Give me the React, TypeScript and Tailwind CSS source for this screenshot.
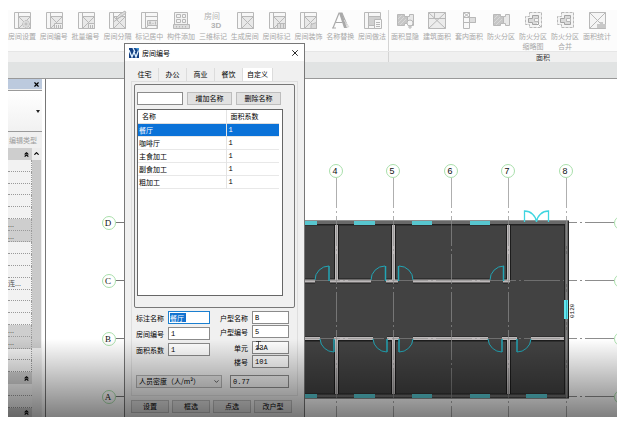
import { useState } from "react";
import type { ReactNode } from "react";
import { ChevronDown, ChevronUp, ChevronsUp, X } from "lucide-react";

const roomFrame = (
  <>
    <path d="M1.5 1.5h16v16h-16z" fill="#f7f7f7" />
    <path d="M5.5 1.5v16M5.5 5.5h12" />
  </>
);

const roomCross = (
  <>
    {roomFrame}
    <path d="M5.5 5.5h12v12h-12z" fill="#e8e8e8" />
    <path d="M5.5 5.5l12 12M17.5 5.5l-12 12" />
  </>
);

const roomTools: { label: string; icon: ReactNode }[] = [
  {
    label: "房间设置",
    icon: (
      <>
        {roomCross}
        <circle cx="13" cy="13" r="3.5" fill="#dcdcdc" strokeDasharray="1.5 1" />
        <circle cx="13" cy="13" r="1" />
      </>
    ),
  },
  {
    label: "房间编号",
    icon: (
      <>
        {roomCross}
        <path d="M9.5 12.5h8v5h-8z" fill="#eee" />
        <path d="M11.5 14v3M13.5 14v3M15.5 14v3" />
      </>
    ),
  },
  {
    label: "批量编号",
    icon: (
      <>
        {roomCross}
        <path d="M11.5 12.5h6v5h-6z" fill="#eee" />
        <path d="M13.5 14v3M15.5 14v3" />
      </>
    ),
  },
  {
    label: "房间分隔",
    icon: (
      <>
        {roomCross}
        <path d="M8 7l4-4 5-3 1 2-4 3-5 3z" fill="#ddd" />
        <path d="M5.5 11l8-6" />
      </>
    ),
  },
  {
    label: "标记居中",
    icon: (
      <>
        {roomFrame}
        <path d="M7.5 9.5h10v5h-10z" fill="#e4e4e4" />
        <path d="M9 13.5l1-3 1 3M12.5 12.5h1M15.5 10.5v3M8 14.5l-2 3M17 14.5v3" />
      </>
    ),
  },
  {
    label: "构件添加",
    icon: (
      <>
        <path d="M2.5 1.5h13v12h-13z" fill="#f3f3f3" />
        <path d="M4.5 3.5h4v3h-4zM10.5 3.5h3v3h-3zM4.5 8.5h4v3h-4zM10.5 8.5h3v3h-3z" />
        <path d="M1.5 13.5h16v4h-16z" fill="#ddd" />
        <path d="M4.5 15v1.5M7.5 15v1.5M10.5 15v1.5M13.5 15v1.5" />
      </>
    ),
  },
  {
    label: "三维标记",
    icon: (
      <g stroke="none" fill="#b2b2b2">
        <text x="0" y="8" fontSize="8" fontFamily="Noto Sans CJK SC, sans-serif">房间</text>
        <text x="7" y="17" fontSize="8" fontWeight="700" fontFamily="Liberation Sans, sans-serif">3D</text>
      </g>
    ),
  },
  { label: "生成房间", icon: roomCross },
  {
    label: "房间标记",
    icon: (
      <>
        {roomCross}
        <path d="M9.5 12.5h8v5h-8z" fill="#ddd" />
        <path d="M12.5 13v4M15.5 13v4" />
      </>
    ),
  },
  {
    label: "房间装饰",
    icon: (
      <>
        {roomCross}
        <path d="M12 13.5l5.500-2v6H12z" fill="#d8d8d8" />
      </>
    ),
  },
  {
    label: "名称替换",
    icon: (
      <>
        <path d="M2 17L8 2h3l5 12" stroke="#a9a9a9" strokeWidth="1.2" />
        <path d="M8 2h3l5 15h-3z" fill="#a9a9a9" stroke="none" />
        <path d="M4.500 11.500h7M1 17h4" stroke="#a9a9a9" strokeWidth="1.2" />
        <path d="M13 9l5 7M15 13l2 4" stroke="#d8d8d8" />
      </>
    ),
  },
  {
    label: "房间做法",
    icon: (
      <>
        {roomFrame}
        <path d="M5.5 5.500h12v9h-12z" fill="#d0d0d0" />
        <path d="M11.5 8.5h7v9h-7z" fill="#f8f8f8" />
        <path d="M13 11.5h4M13 13.5h4M13 15.5h4" />
      </>
    ),
  },
];

const unitPlan = (
  <>
    <path d="M1.5 3.5h7v2h3v7h-3v2h-7z" fill="#c6c6c6" />
    <path d="M11.5 5.5h2v-2h4v11h-4v-2h-2z" fill="#e8e8e8" />
    <path d="M2 8l4-4M2 12l6-6M4 14l6-6" stroke="#d8d8d8" />
  </>
);

const splitPlan = (
  <>
    <path d="M5.5 1.5h12v15h-12v-3h-4v-8h4z" fill="#f4f4f4" strokeDasharray="3 1" />
    <path d="M8.5 4.500h6v9h-6v-2h-4v-4h4z" fill="#dadada" stroke="#a4a4a4" />
    <path d="M10.5 7.5h4v3h-4z" fill="#f6f6f6" />
  </>
);

const areaTools: { label: string; icon: ReactNode }[] = [
  {
    label: "面积显隐",
    icon: (
      <>
        {unitPlan}
        <circle cx="14" cy="12" r="3" fill="#f4f4f4" />
        <path d="M13 15h2v2h-2z" />
      </>
    ),
  },
  {
    label: "建筑面积",
    icon: (
      <>
        <path d="M.5 1.5h17v16H.5z" fill="#ececec" />
        <path d="M.5 1.5l17 16M17.5 1.5l-17 16M.5 7.5h17M6.5 1.5v6" />
      </>
    ),
  },
  {
    label: "套内面积",
    icon: (
      <>
        <path d="M3.5 1.5h6v5h6v5h-6v6h-6z" fill="#f9f9f9" />
        <path d="M3.5 1.5l6 5M9.5 1.5l-6 5M3.5 6.5h6M3.5 11.5h6" />
        <path d="M9.5 6.5h6v5h-6z" fill="#ddd" />
      </>
    ),
  },
  { label: "防火分区", icon: unitPlan },
  {
    label: "防火分区\n缩略图",
    icon: (
      <>
        {splitPlan}
        <path d="M13 12l4 4M13 16l4-4" stroke="#fff" />
        <path d="M14 13l3 3" />
      </>
    ),
  },
  { label: "防火分区\n合并", icon: splitPlan },
  {
    label: "面积统计",
    icon: (
      <>
        <path d="M1.5 1.5h16v16h-16z" fill="#f5f5f5" />
        <path d="M1.5 1.5l16 16M17.5 1.5l-16 16" />
        <path d="M9 17v-4h3v-2h3v2h3v4z" fill="#c8c8c8" stroke="none" />
      </>
    ),
  },
];

const rooms = [
  { name: "餐厅", factor: 1 },
  { name: "咖啡厅", factor: 1 },
  { name: "主食加工", factor: 1 },
  { name: "副食加工", factor: 1 },
  { name: "粗加工", factor: 1 },
];

const tabs = ["住宅", "办公", "商业", "餐饮", "自定义"];

const properties = ["", "", "", "", "", "...", "...", "", "", "", "连...", "", "", "", "...", "...", "", ""];

function ToolButton({ label, icon }: { label: string; icon: ReactNode }) {
  return (
    <button type="button" className="flex flex-col items-center">
      <svg viewBox="0 0 18 18" className="h-[18px] w-[18px] overflow-visible" fill="none" stroke="#b8b8b8" strokeWidth="1">
        {icon}
      </svg>
      <span className="mt-0.5 text-center leading-[10px] whitespace-pre text-[#a8a8a8]">{label}</span>
    </button>
  );
}

function Ribbon() {
  return (
    <header>
      <div className="flex bg-[#fcfcfc]">
        <div className="-ml-0.5 grid w-[383px] shrink-0 grid-cols-12 border-r border-[#d4d4d4] pt-px">
          {roomTools.map((tool) => (
            <ToolButton key={tool.label} {...tool} />
          ))}
        </div>
        <div className="grid w-56 shrink-0 grid-cols-7 pt-px">
          {areaTools.map((tool) => (
            <ToolButton key={tool.label} {...tool} />
          ))}
        </div>
      </div>
      <div className="flex h-[11px] border-t border-[#e6e6e6] bg-[#f0f0f0]">
        <div className="w-[381px] shrink-0 border-r border-[#d4d4d4]" />
        <div className="flex-1 pl-20 text-center leading-[10px] text-[#333]">面积</div>
      </div>
      <div className="h-4 bg-[#e1e3e3]" />
    </header>
  );
}

function SectionHeader({ height = "h-3" }: { height?: string }) {
  return (
    <div className={`flex shrink-0 items-center justify-end bg-[#cecece] pr-0.5 ${height}`}>
      <ChevronsUp size={7} strokeWidth={4} />
    </div>
  );
}

function PropertyPanel() {
  return (
    <aside className="flex w-[34px] shrink-0 flex-col bg-[#f0f0f0]">
      <div className="flex h-2.5 items-center justify-end bg-[#bccade] pr-0.5">
        <button type="button" aria-label="关闭">
          <X size={7} strokeWidth={4} />
        </button>
      </div>
      <div className="mt-px flex h-[42px] items-center justify-end border-y border-[#9a9a9a] bg-linear-to-b from-white to-[#f1f1f1] pr-0.5">
        <span className="border-x-2 border-t-3 border-x-transparent border-t-[#222]" />
      </div>
      <button type="button" className="h-4 pl-px text-left whitespace-nowrap text-[#9c9c9c]">
        编辑类型
      </button>
      <div className="flex">
        <div className="w-6">
          <SectionHeader />
          <div className="flex h-[212px] flex-col">
            {properties.map((value, i) => (
              <div
                key={i}
                className={`flex-1 border-r border-b border-dotted border-[#999] leading-[10px] whitespace-nowrap text-[#555] ${value === "..." ? "bg-[#cecece]" : "bg-[#f2f2f2]"}`}
              >
                {value}
              </div>
            ))}
          </div>
          <SectionHeader />
          <div className="h-3 border-b border-dotted border-[#999]" />
          <div className="h-3 border-b border-dotted border-[#999]" />
          <SectionHeader height="h-[9px]" />
        </div>
        <div className="flex w-[9px] flex-col items-center bg-[#ececec]">
          <ChevronUp size={7} strokeWidth={4} className="my-0.5 shrink-0" />
          <div className="mt-px h-[188px] w-full bg-[#c9c9c9]" />
        </div>
      </div>
    </aside>
  );
}

const columns = [
  { x: 336, label: "4" },
  { x: 393, label: "5" },
  { x: 451, label: "6" },
  { x: 508, label: "7" },
  { x: 566, label: "8" },
];

const axes = [
  { y: 222, label: "D" },
  { y: 280, label: "C" },
  { y: 338, label: "B" },
  { y: 396, label: "A" },
];

function FloorPlan() {
  return (
    <svg viewBox="46 79 571 338" className="block h-[338px] w-[571px]" fill="none">
      {/* grid bubbles */}
      <g stroke="#a9dfab" fontFamily="Liberation Mono, monospace" fontSize="9" textAnchor="middle">
        {columns.map(({ x, label }) => (
          <g key={label}>
            <circle cx={x} cy="171" r="6.5" />
            <text x={x - 1} y="174" fill="#111" stroke="none">{label}</text>
          </g>
        ))}
        {axes.map(({ y, label }) => (
          <g key={label}>
            <circle cx="109" cy={y + 1} r="6.5" />
            <circle cx="621" cy={y + 1} r="6.5" />
            <text x="108" y={y + 4} fill="#111" stroke="none" fontFamily="Liberation Serif, serif">{label}</text>
            <path d={`M116 ${y + 0.5}h20`} stroke="#777" />
          </g>
        ))}
      </g>

      {/* outer walls */}
      <path d="M140 223H566.5V396H140z" fill="#424242" stroke="#222" strokeWidth="5" />
      <path d="M140 222.5H566.500V396H140z" stroke="#696969" strokeWidth="3" />

      {/* inner walls */}
      <path
        d="M336.5 225v56M393.5 225v56M508.5 225v56M336.5 339v55M393.5 339v55M508.5 339v55M304 281h11M330 281h41M386 281h12M413 281h77M503 281h7M304 339h16M334 339h39M387 339h12M413 339h75M502 339h15M531 339h33"
        stroke="#1c1c1c"
        strokeWidth="5"
      />
      <path
        d="M336.5 225v56M393.5 225v56M508.5 225v56M336.5 339v55M393.5 339v55M508.5 339v55M304 281h11M330 281h41M386 281h12M413 281h77M503 281h7M304 338.5h16M334 338.5h39M387 338.5h12M413 338.5h75M502 338.5h15M531 338.5h33"
        stroke="#bdb9ba"
        strokeWidth="3"
      />

      {/* grid lines */}
      <g stroke="#8d8d8d" strokeDasharray="30 3 2 3">
        {columns.map(({ x, label }) => (
          <path key={label} d={`M${x + 0.5} 178V417`} opacity="0.7" />
        ))}
      </g>
      <g stroke="#8d8d8d">
        {axes.map(({ y, label }) => (
          <path key={label} d={`M569 ${y + 0.5}h8M580 ${y + 0.5}h2M585 ${y + 0.5}h29`} />
        ))}
        <path d="M304 280.5H564" strokeDasharray="36 3 2 3" opacity="0.6" />
        <path d="M304 338.5H564" strokeDasharray="36 3 2 3" opacity="0.6" />
      </g>

      {/* windows */}
      <g fill="#57c6cf">
        <path d="M304 221h13v4h-13zM354 221h21v4h-21zM412 221h20v4h-20zM470 221h20v4h-20z" />
        <path d="M304 394h13v4h-13zM354 394h21v4h-21zM412 394h20v4h-20zM470 394h20v4h-20zM526 394h21v4h-21z" />
        <path d="M564 300h4v19h-4z" fill="#62e4ec" />
      </g>
      <path d="M566.5 300v19" stroke="#35b9c6" />

      {/* doors */}
      <g stroke="#22a5b5">
        <path d="M315 280a14 14 0 0 1 14-14M371 280a14 14 0 0 1 14-14M413 280a14 14 0 0 0-14-14M490 280a14 14 0 0 1 14-14" />
        <path d="M320 339a14 14 0 0 0 14 13M373 339a14 14 0 0 0 14 13M413 339a14 14 0 0 1-14 13M488 339a14 14 0 0 0 14 13M531 339a14 14 0 0 1-14 13" />
        <path
          d="M329 266v15M385.5 266v15M398.5 266v15M503.5 266v15M334 339v13M387 339v13M399 339v13M502 339v13M517 339v13"
          strokeWidth="1.5"
        />
        <path d="M524.5 222v-11a12 12 0 0 1 12 11a12 12 0 0 1 12-11v11" stroke="#3fd5e0" strokeWidth="1.3" />
      </g>
      <text transform="translate(574 318) rotate(-90)" fontSize="6" fill="#111" fontFamily="Liberation Mono, monospace">
        0120
      </text>
    </svg>
  );
}

const field = "h-[13px] border border-[#8b8b8b] px-0.5 font-['Liberation_Mono','Noto_Sans_CJK_SC',monospace] text-[7px] text-black";
const push = "h-[13px] border border-[#bdbdbd] bg-[#e1e1e1] leading-[11px]";

function Field({ id, label, value, width }: { id: string; label: string; value: string; width: string }) {
  return (
    <div className="flex items-center justify-end gap-1">
      <label htmlFor={id} className="whitespace-nowrap">{label}</label>
      <input id={id} defaultValue={value} className={`bg-white ${field} ${width}`} />
    </div>
  );
}

function RoomNumberDialog() {
  const [tab, setTab] = useState("自定义");
  const [selected, setSelected] = useState("餐厅");

  return (
    <section
      role="dialog"
      aria-label="房间编号"
      className="absolute top-[33px] bottom-0 left-[116px] w-[181px] border-x border-t border-[#777] bg-[#f0f0f0] text-black"
    >
      <div className="flex h-[17px] items-center bg-white px-1">
        <svg viewBox="0 0 10 10" className="mr-[3px] h-2.5 w-2.5">
          <path d="M0 0h10v10H0z" fill="#123f83" />
          <path d="M0 2l3 7 2-5 2 5 3-8M4 0l2 4" fill="none" stroke="#dff1ff" strokeWidth="1.3" />
          <path d="M6 0h4v3z" fill="#3e91d2" />
        </svg>
        <h1 className="flex-1">房间编号</h1>
        <button type="button" aria-label="关闭">
          <X size={10} strokeWidth={2} />
        </button>
      </div>

      <div className="px-1.5 pt-[7px]">
        <div className="flex" role="tablist">
          {tabs.map((name) => (
            <button
              key={name}
              type="button"
              role="tab"
              aria-selected={tab === name}
              onClick={() => setTab(name)}
              className={`h-[13px] border-r border-[#dcdcdc] leading-[13px] ${tab === name ? "w-[30px] bg-white" : "w-7"}`}
            >
              {name}
            </button>
          ))}
        </div>

        <div className="border border-[#dedede] px-0.5 pt-0.5 pb-[7px]">
          <div className="h-[224px] rounded-xs border border-[#777] px-0.5 pt-[7px]">
            <div className="flex gap-1">
              <input aria-label="名称" className={`bg-white ${field} w-[46px]`} />
              <button type="button" className={`${push} w-[45px]`}>增加名称</button>
              <button type="button" className={`${push} w-[45px]`}>删除名称</button>
            </div>
            <div className="mt-1 h-[187px] w-[146px] border border-[#666] bg-white">
              <table className="w-[141px] table-fixed border-collapse text-left">
                <thead>
                  <tr className="h-[13px] border-b border-[#ddd]">
                    <th className="w-[88px] border-r border-[#e4e4e4] pl-1 font-normal">名称</th>
                    <th className="pl-1 font-normal">面积系数</th>
                  </tr>
                </thead>
                <tbody>
                  {rooms.map((room) => (
                    <tr
                      key={room.name}
                      onClick={() => setSelected(room.name)}
                      className={`h-[13px] border-b border-[#e8e8e8] ${selected === room.name ? "bg-[#0a72d8] text-white" : ""}`}
                    >
                      <td className="border-r border-[#e4e4e4] pl-px">{room.name}</td>
                      <td className="pl-0.5 font-['Liberation_Mono',monospace]">{room.factor}</td>
                    </tr>
                  ))}
                </tbody>
              </table>
            </div>
          </div>

          <div className="mt-[3px] flex justify-between pr-1.5 pl-0.5">
            <div className="flex flex-col gap-[3px]">
              <div className="flex items-center gap-1">
                <label htmlFor="label-name">标注名称</label>
                <div className="flex h-[13px] w-[42px] items-center border border-[#1b7fd0] bg-white pl-px">
                  <input
                    id="label-name"
                    defaultValue="餐厅"
                    className="h-[9px] w-4 bg-[#1272cf] text-[7px] text-white"
                  />
                </div>
              </div>
              <Field id="room-no" label="房间编号" value="1" width="w-[42px]" />
              <Field id="area-factor" label="面积系数" value="1" width="w-[42px]" />
            </div>
            <div className="flex flex-col gap-px">
              <Field id="type-name" label="户型名称" value="B" width="w-[37px]" />
              <Field id="type-no" label="户型编号" value="5" width="w-[37px]" />
              <div className="mt-0.5">
                <Field id="unit" label="单元" value="13A" width="w-[37px]" />
              </div>
              <Field id="building-no" label="楼号" value="101" width="w-[37px]" />
            </div>
          </div>

          <div className="mt-[7px] flex justify-between pr-1.5 pl-0.5">
            <div className="relative">
              <select
                aria-label="指标"
                className="h-[13px] w-[86px] appearance-none border border-[#b0b0b0] bg-[#e6e6e6] pl-0.5 text-[7px] leading-[11px]"
              >
                <option>人员密度（人/m²）</option>
              </select>
              <ChevronDown size={7} className="pointer-events-none absolute top-[3px] right-0.5" />
            </div>
            <input aria-label="人员密度" defaultValue="0.77" className={`bg-[#f0f0f0] ${field} w-[59px]`} />
          </div>
        </div>
      </div>

      <div className="flex gap-[3px] px-1.5 pt-1">
        {["设置", "框选", "点选", "改户型"].map((name) => (
          <button key={name} type="button" className={`${push} w-[38px]`}>{name}</button>
        ))}
      </div>

      {/* text cursor over the unit field */}
      <svg viewBox="0 0 5 8" className="pointer-events-none absolute top-[297px] left-[131px] h-2 w-[5px]" stroke="#222" fill="none">
        <path d="M0 .5h5M2.5 0v8M0 7.500h5" strokeWidth="0.7" />
      </svg>
    </section>
  );
}

export default function App() {
  return (
    <div className="bg-white px-2 pt-2.5 font-['Noto_Sans_CJK_SC',sans-serif] text-[7px] leading-[10px]">
      <main className="relative overflow-hidden">
        <Ribbon />
        <div className="flex border-t border-[#999]">
          <PropertyPanel />
          <div className="ml-[3px] flex-1 overflow-hidden border-l border-[#777] bg-white">
            <FloorPlan />
          </div>
        </div>
        <RoomNumberDialog />
        <div className="pointer-events-none absolute inset-x-0 bottom-0 h-[78px] bg-linear-to-b from-transparent to-black/50" />
      </main>
    </div>
  );
}
